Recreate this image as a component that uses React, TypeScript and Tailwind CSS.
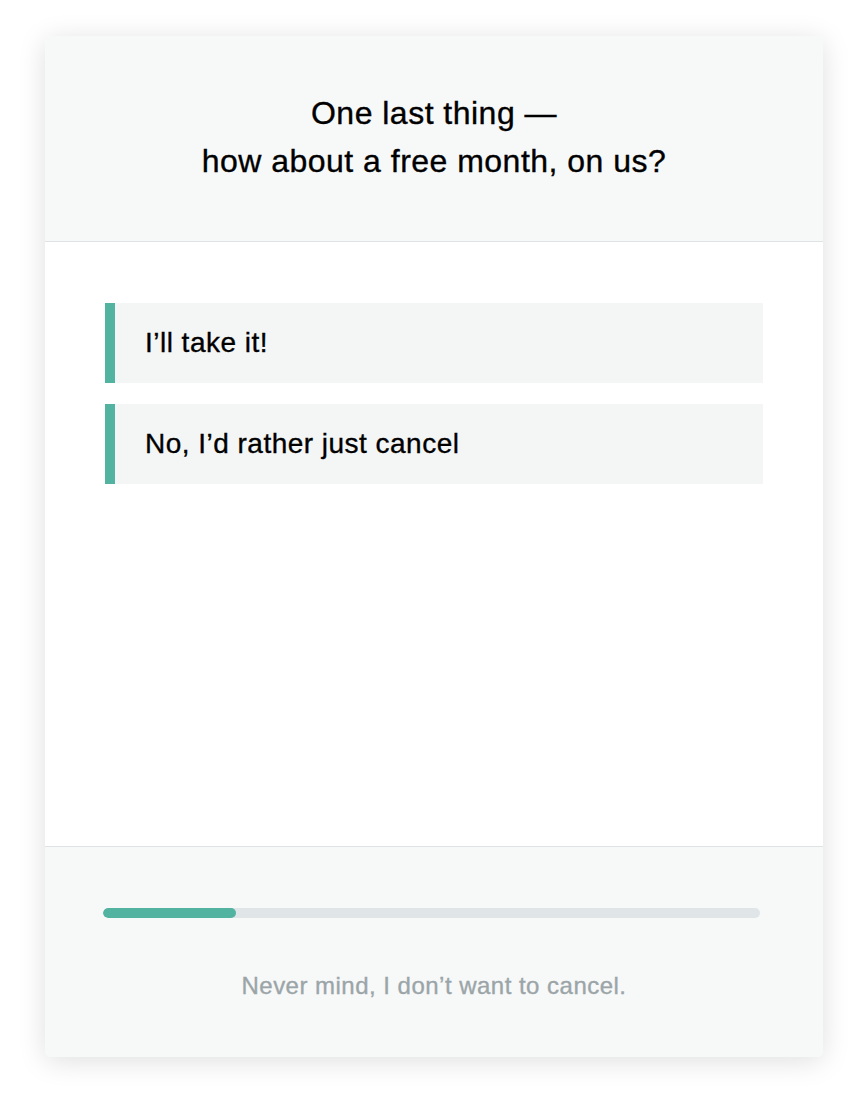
import React from "react";

export default function App() {
  const font = { fontFamily: '"Liberation Sans", Arial, sans-serif' };
  return (
    <div className="min-h-screen w-[866px] h-[1096px] bg-white pt-[36px] pl-[45px]" style={font}>
      <div className="w-[778px] h-[1021px] rounded-[6px] bg-white flex flex-col overflow-hidden shadow-[0_4px_28px_rgba(0,0,0,0.13)] [-webkit-text-stroke:0.35px] tracking-[0.03em]">
        <div className="h-[206px] bg-[#f7f8f8] border-b border-[#dfe3e4] flex flex-col items-center justify-center text-[32px] leading-[48px] text-black pb-[4px]">
          <div>One last thing —</div>
          <div>how about a free month, on us?</div>
        </div>
        <div className="flex-1 bg-white px-[60px] pt-[61px] flex flex-col gap-[21px]">
          <button className="h-[80px] w-full bg-[#f4f6f6] border-l-[10px] border-[#52b4a0] text-left pl-[30px] text-[28px] text-black">
            I’ll take it!
          </button>
          <button className="h-[80px] w-full bg-[#f4f6f6] border-l-[10px] border-[#52b4a0] text-left pl-[30px] text-[28px] text-black">
            No, I’d rather just cancel
          </button>
        </div>
        <div className="h-[211px] bg-[#f7f8f8] border-t border-[#dfe3e4] px-[58px] pt-[61px] flex flex-col">
          <div className="h-[10px] w-[657px] rounded-full bg-[#e0e5e7] overflow-hidden">
            <div className="h-full w-[133px] rounded-full bg-[#52b4a0]" />
          </div>
          <div className="mt-[50px] text-center text-[24px] text-[#9ba5a8]">
            Never mind, I don’t want to cancel.
          </div>
        </div>
      </div>
    </div>
  );
}
